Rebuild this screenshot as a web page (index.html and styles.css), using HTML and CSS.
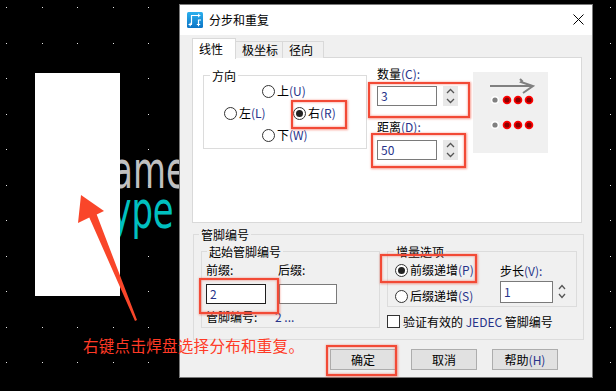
FILE: index.html
```html
<!DOCTYPE html>
<html lang="zh-CN">
<head>
<meta charset="utf-8">
<title>分步和重复</title>
<link rel="stylesheet" href="styles.css">
</head>
<body>
<div class="desk">
  <svg class="layer" width="616" height="391" viewBox="0 0 616 391">
    <defs>
      <pattern id="dots" width="71" height="71" patternUnits="userSpaceOnUse">
        <rect x="6" y="7" width="1" height="1" fill="#e6e6e6"/>
        <rect x="42" y="7" width="1" height="1" fill="#e6e6e6"/>
        <rect x="6" y="43" width="1" height="1" fill="#e6e6e6"/>
        <rect x="42" y="43" width="1" height="1" fill="#e6e6e6"/>
      </pattern>
    </defs>
    <rect width="616" height="391" fill="url(#dots)"/>
  </svg>
  <div class="cad-text cad-name">Name</div>
  <div class="cad-text cad-type">Type</div>
  <div class="pad"></div>
  <svg class="layer" width="616" height="391" viewBox="0 0 616 391">
    <polygon points="81,195 104,211 96.7,214.5 137,320 135,321 89.3,217.5 78,223" fill="#f9462a"/>
  </svg>

  <div class="dialog">
    <div class="titlebar">
      <svg class="app-icon" width="16" height="16" viewBox="0 0 16 16">
        <defs>
          <linearGradient id="ig" x1="0" y1="0" x2="0" y2="1">
            <stop offset="0" stop-color="#2bb0ee"/>
            <stop offset="1" stop-color="#0b74c6"/>
          </linearGradient>
        </defs>
        <rect x="0" y="0" width="16" height="16" rx="1.5" fill="url(#ig)"/>
        <path d="M4.5 12V3.5H11.5M11.5 12V8H14" fill="none" stroke="#fff" stroke-width="1.2"/>
        <path d="M1.5 12.5H5M3.2 10.8V14.2M9.8 12.5H13.2M11.5 10.8V14.2M10 3.5H13.4M11.7 1.8V5.2" fill="none" stroke="#fff" stroke-width="1.1"/>
      </svg>
      <span class="title">分步和重复</span>
      <svg class="close" width="11" height="11" viewBox="0 0 11 11">
        <path d="M0.5 0.5L10.5 10.5M10.5 0.5L0.5 10.5" stroke="#000" stroke-width="1"/>
      </svg>
    </div>

    <div class="body">
      <div class="tabs">
        <div class="tab active">线性</div>
        <div class="tab t2">极坐标</div>
        <div class="tab t3">径向</div>
      </div>

      <div class="panel">
        <fieldset class="grp dir">
          <legend>方向</legend>
          <div class="row r1"><span class="opt"><i class="radio"></i><span>上<span class="lat">(U)</span></span></span></div>
          <div class="row r2"><span class="opt w-left"><i class="radio"></i><span>左<span class="lat">(L)</span></span></span><span class="opt"><i class="radio on"></i><span>右<span class="lat">(R)</span></span></span></div>
          <div class="row r3"><span class="opt"><i class="radio"></i><span>下<span class="lat">(W)</span></span></span></div>
        </fieldset>

        <div class="params">
          <div class="plabel">数量<span class="lat">(C):</span></div>
          <div class="field">
            <div class="box w60"><span class="lat">3</span></div>
            <div class="spin">
              <svg width="15" height="20" viewBox="0 0 15 20"><path d="M4 7L7.5 3.5L11 7M4 13L7.5 16.5L11 13" fill="none" stroke="#555" stroke-width="1.3"/></svg>
            </div>
          </div>
          <div class="plabel p2">距离<span class="lat">(D):</span></div>
          <div class="field f2">
            <div class="box w60"><span class="lat">50</span></div>
            <div class="spin">
              <svg width="15" height="20" viewBox="0 0 15 20"><path d="M4 7L7.5 3.5L11 7M4 13L7.5 16.5L11 13" fill="none" stroke="#555" stroke-width="1.3"/></svg>
            </div>
          </div>
        </div>

        <div class="preview">
          <svg width="75" height="81" viewBox="0 0 75 81">
            <path d="M17 14H59" stroke="#808080" stroke-width="2"/>
            <path d="M47 7L49 9L48 10L60 14L50 21" fill="none" stroke="#808080" stroke-width="2"/>
            <g>
              <circle cx="22" cy="28" r="4" fill="#fff"/>
              <circle cx="22" cy="28" r="2.6" fill="#808080"/>
              <circle cx="34" cy="28" r="4.3" fill="#ff0000"/>
              <circle cx="34" cy="28" r="2.6" fill="#8a0000"/>
              <circle cx="45" cy="28" r="4.3" fill="#ff0000"/>
              <circle cx="45" cy="28" r="2.6" fill="#8a0000"/>
              <circle cx="56" cy="28" r="4.3" fill="#ff0000"/>
              <circle cx="56" cy="28" r="2.6" fill="#8a0000"/>
            </g>
            <g>
              <circle cx="22" cy="53" r="4" fill="#fff"/>
              <circle cx="22" cy="53" r="2.6" fill="#808080"/>
              <circle cx="34" cy="53" r="4.3" fill="#ff0000"/>
              <circle cx="34" cy="53" r="2.6" fill="#8a0000"/>
              <circle cx="45" cy="53" r="4.3" fill="#ff0000"/>
              <circle cx="45" cy="53" r="2.6" fill="#8a0000"/>
              <circle cx="56" cy="53" r="4.3" fill="#ff0000"/>
              <circle cx="56" cy="53" r="2.6" fill="#8a0000"/>
            </g>
          </svg>
        </div>
      </div>

      <fieldset class="grp pins">
        <legend>管脚编号</legend>
        <div class="pins-row">
          <fieldset class="grp start">
            <legend>起始管脚编号</legend>
            <div class="start-in">
              <div class="srow labels"><span class="c1">前缀:</span><span>后缀:</span></div>
              <div class="srow inputs"><div class="box w60 dark"><span class="lat">2</span></div><div class="box w58"></div></div>
              <div class="srow pinno"><span class="c1b">管脚编号:</span><span class="lat">2 ...</span></div>
            </div>
          </fieldset>
          <div class="rcol">
            <fieldset class="grp inc">
              <legend>增量选项</legend>
              <div class="inc-in">
                <div class="radios">
                  <div class="irow ir1"><span class="opt"><i class="radio on"></i><span>前缀递增<span class="lat">(P)</span></span></span></div>
                  <div class="irow ir2"><span class="opt"><i class="radio"></i><span>后缀递增<span class="lat">(S)</span></span></span></div>
                </div>
                <div class="step">
                  <div class="plabel s1">步长<span class="lat">(V):</span></div>
                  <div class="field f3">
                    <div class="box w53 h22"><span class="lat">1</span></div>
                    <div class="spin small">
                      <svg width="8" height="22" viewBox="0 0 8 22"><path d="M1 8L4 4.5L7 8M1 13L4 16.5L7 13" fill="none" stroke="#555" stroke-width="1.3"/></svg>
                    </div>
                  </div>
                </div>
              </div>
            </fieldset>
            <div class="check"><i class="cbox"></i><span class="check-text">验证有效的 <span class="lat">JEDEC</span> 管脚编号</span></div>
          </div>
        </div>
      </fieldset>

      <div class="buttons">
        <div class="btn def">确定</div>
        <div class="btn">取消</div>
        <div class="btn"><span>帮助<span class="lat">(H)</span></span></div>
      </div>
    </div>
  </div>

  <div class="mark m1"></div>
  <div class="mark m2"></div>
  <div class="mark m3"></div>
  <div class="mark m4"></div>
  <div class="mark m5"></div>
  <div class="mark m6"></div>

  <div class="caption">右键点击焊盘选择分布和重复。</div>
</div>
</body>
</html>
```
FILE: styles.css
```css
* { box-sizing: border-box; }
html, body { margin: 0; padding: 0; background: #000; }
body {
  width: 616px; height: 391px; overflow: hidden;
  font-family: "Noto Sans CJK SC", "Noto Sans", sans-serif;
  font-size: 12px; color: #000;
}
.desk { position: relative; width: 616px; height: 391px; background: #000; overflow: hidden; }
.layer { position: absolute; left: 0; top: 0; }

.cad-text {
  position: absolute;
  font-family: "DejaVu Sans", sans-serif;
  font-size: 52px; line-height: 36px;
  white-space: nowrap;
  transform: scaleX(0.65); transform-origin: 0 0;
}
.cad-name { left: 87px; top: 152px; color: #c0c0c0; }
.cad-type { left: 96px; top: 192px; color: #00c0c0; }
.pad { position: absolute; left: 35px; top: 73px; width: 85px; height: 223px; background: #fff; }

.dialog {
  position: absolute; left: 179px; top: 4px;
  width: 414px; height: 374px;
  border: 1px solid #7a7a7a;
  background: #f0f0f0;
}
.titlebar {
  height: 30px; background: #fff;
  display: flex; align-items: center;
  padding-left: 7px;
}
.app-icon { display: block; margin-top: -1px; }
.title { margin-left: 6px; line-height: 16px; }
.close { margin-left: auto; margin-right: 8px; margin-top: -1px; display: block; }

.lat { color: #26338a; }

.body { padding: 3px 11px 0 12px; }

.tabs { display: flex; align-items: flex-start; height: 20px; margin-bottom: -1px; }
.tab {
  display: flex; align-items: center;
  border: 1px solid #d9d9d9; border-bottom: none;
  background: #f0f0f0;
  height: 17px; margin-top: 3px;
  padding-left: 6px; line-height: 14px;
}
.tab.active {
  position: relative; z-index: 1;
  background: #fff; height: 21px; margin-top: 0; width: 44px;
  padding-bottom: 1px;
}
.tab.t2 { width: 47px; border-left: none; }
.tab.t3 { width: 41px; border-left: none; }

.panel {
  width: 390px; height: 166px;
  background: #fff; border: 1px solid #d9d9d9;
  display: flex; align-items: flex-start;
}

.grp { border: 1px solid #dcdcdc; margin: 0; padding: 0; min-width: 0; }
.grp legend { padding: 0 2px; line-height: 15px; }

.dir { width: 164px; margin: 10px 0 0 10px; padding-bottom: 2px; }
.dir legend { margin-left: 6px; }
.row { height: 22px; display: flex; align-items: center; line-height: 16px; }
.r1 { margin-top: -3px; padding-left: 58px; }
.r2 { padding-left: 20px; }
.r3 { padding-left: 58px; }
.opt { display: flex; align-items: center; white-space: nowrap; }
.w-left { width: 69px; }
.radio {
  display: block; position: relative;
  width: 13px; height: 13px; border-radius: 50%;
  border: 1px solid #333; background: #fff;
  margin-right: 2px; flex: none;
}
.radio.on::after {
  content: ""; position: absolute; left: 2px; top: 2px;
  width: 7px; height: 7px; border-radius: 50%; background: #222;
}

.params { margin: 8px 0 0 10px; }
.plabel { line-height: 16px; height: 16px; white-space: nowrap; }
.p2 { margin-top: 13px; }
.field { display: flex; margin-top: 4px; }
.f2 { margin-top: 5px; }
.box {
  height: 20px; border: 1px solid #7a7a7a; background: #fff;
  padding-left: 3px; line-height: 18px;
}
.box.dark { border-color: #1e1e1e; }
.w60 { width: 60px; }
.w58 { width: 58px; }
.w53 { width: 53px; }
.h22 { height: 22px; line-height: 20px; }
.spin { width: 15px; height: 20px; margin-left: 6px; background: #e8e8e8; }
.spin svg { display: block; }
.spin.small { width: 8px; height: 22px; margin-left: 5px; background: transparent; }

.preview { width: 75px; height: 81px; margin: 14px 0 0 15px; background: #f0f0f0; }
.preview svg { display: block; }

.pins { width: 391px; margin: 4px 0 0 1px; }
.pins legend { margin-left: 5px; }
.pins-row { display: flex; align-items: flex-start; padding: 2px 0 11px 7px; }
.start { width: 179px; }
.start legend { margin-left: 5px; }
.start-in { padding: 0 0 2px 4px; }
.srow { display: flex; }
.labels { margin-top: 3px; height: 16px; line-height: 16px; }
.c1 { width: 72px; }
.inputs { margin-top: 6px; gap: 13px; }
.pinno { margin-top: 5px; height: 16px; line-height: 16px; }
.c1b { width: 69px; }

.rcol { margin-left: 7px; }
.inc { width: 190px; }
.inc legend { margin-left: 6px; }
.inc-in { display: flex; padding-left: 7px; }
.radios { width: 105px; }
.irow { height: 20px; display: flex; align-items: center; line-height: 16px; }
.ir1 { margin-top: 1px; }
.ir2 { margin-top: 6px; }
.step .s1 { margin-top: 4px; }
.f3 { margin-top: 2px; }

.check { display: flex; align-items: center; height: 13px; margin-top: 8px; white-space: nowrap; line-height: 16px; }
.cbox { display: block; width: 13px; height: 13px; border: 1px solid #333; background: #fff; margin-right: 3px; flex: none; }
.check-text { white-space: pre; }

.buttons { display: flex; justify-content: flex-end; gap: 15px; padding-right: 23px; margin-top: 9px; }
.btn {
  width: 66px; height: 21px;
  background: #e1e1e1; border: 1px solid #adadad;
  display: flex; align-items: center; justify-content: center;
  line-height: 16px;
}

.mark {
  position: absolute;
  border: 2px solid #f24a36;
  box-shadow: 0 0 2px 0.5px rgba(242, 74, 54, 0.55), inset 0 0 2px 0.5px rgba(242, 74, 54, 0.45);
}
.m1 { left: 291px; top: 100px; width: 56px; height: 29px; }
.m2 { left: 368px; top: 82px; width: 102px; height: 36px; }
.m3 { left: 371px; top: 133px; width: 95px; height: 35px; }
.m4 { left: 199px; top: 278px; width: 80px; height: 36px; }
.m5 { left: 380px; top: 254px; width: 97px; height: 29px; }
.m6 { left: 326px; top: 345px; width: 71px; height: 31px; }

.caption {
  position: absolute; left: 83px; top: 336px;
  font-size: 15.5px; line-height: 18px; letter-spacing: 0.3px;
  color: #ff3a26; white-space: nowrap;
}
```
